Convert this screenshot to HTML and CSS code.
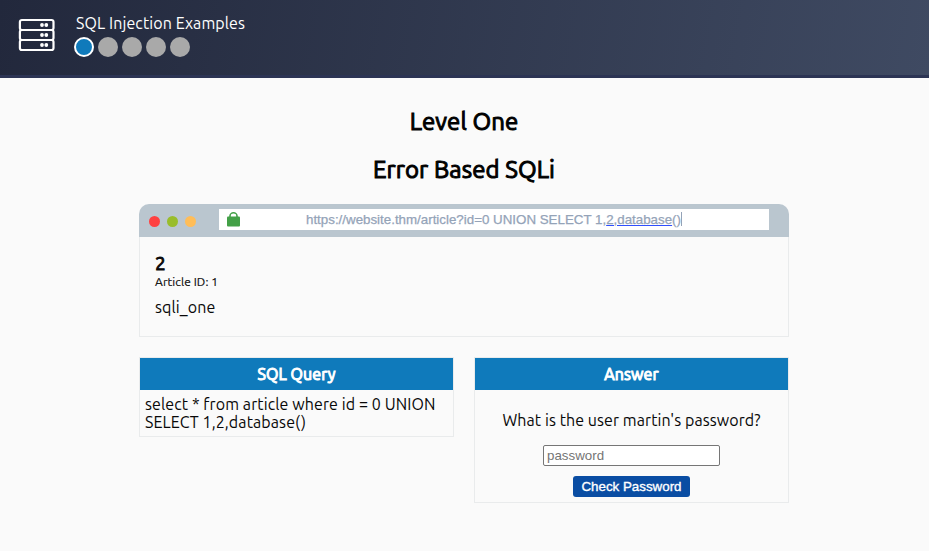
FILE: index.html
```html
<!DOCTYPE html>
<html lang="en">
<head>
<meta charset="utf-8">
<title>SQL Injection Examples</title>
<link rel="stylesheet" href="styles.css">
</head>
<body>
<header class="topbar">
  <svg class="logo" width="38" height="34" viewBox="0 0 38 34" fill="none" stroke="#fff" stroke-width="2.2">
    <rect x="1.9" y="2" width="33.6" height="10" rx="2"/>
    <rect x="1.9" y="12" width="33.6" height="10" rx="2"/>
    <rect x="1.9" y="22" width="33.6" height="10" rx="2"/>
    <g fill="#fff" stroke="none">
      <circle cx="24" cy="7" r="1.9"/><circle cx="28.3" cy="7" r="1.9"/>
      <circle cx="24" cy="17" r="1.9"/><circle cx="28.3" cy="17" r="1.9"/>
      <circle cx="24" cy="27" r="1.9"/><circle cx="28.3" cy="27" r="1.9"/>
    </g>
  </svg>
  <div class="progress">
    <div class="title">SQL Injection Examples</div>
    <div class="steps"><i class="step active"></i><i class="step"></i><i class="step"></i><i class="step"></i><i class="step"></i></div>
  </div>
</header>
<main class="content">
  <h1 class="level">Level One</h1>
  <h1 class="topic">Error Based SQLi</h1>
  <section class="browser">
    <div class="chrome">
      <i class="dot red"></i><i class="dot green"></i><i class="dot amber"></i>
      <div class="address">
        <svg class="lock" width="13" height="15" viewBox="0 0 13 15"><path d="M3 6V4a3.5 3.2 0 0 1 7 0v2" fill="none" stroke="#43a047" stroke-width="1.6"/><rect y="4.5" width="13" height="10" rx="1" fill="#43a047"/></svg>
        <div class="url">https://website.thm/article?id=0 UNION SELECT 1,<u>2,database</u>()<i class="caret"></i></div>
      </div>
    </div>
    <div class="page">
      <div class="article-title">2</div>
      <div class="article-id">Article ID: 1</div>
      <div class="article-body">sqli_one</div>
    </div>
  </section>
  <div class="panels">
    <section class="panel">
      <h2 class="panel-head">SQL Query</h2>
      <div class="query">select * from article where id = 0 UNION SELECT 1,2,database()</div>
    </section>
    <section class="panel">
      <h2 class="panel-head">Answer</h2>
      <div class="answer">
        <p class="question">What is the user martin's password?</p>
        <input class="password" type="text" placeholder="password">
        <button class="check">Check Password</button>
      </div>
    </section>
  </div>
</main>
</body>
</html>
```
FILE: styles.css
```css
* { box-sizing: border-box; }
body {
  margin: 0;
  min-height: 551px;
  background: #fafafa;
  color: #080808;
  font: 16px/18px Ubuntu, "Noto Sans", sans-serif;
}
.topbar {
  display: flex;
  height: 78px;
  padding: 14px 0 0 18px;
  border-bottom: 3px solid #2c3454;
  background: linear-gradient(100deg, #22283c, #3f4a62);
  background-origin: border-box;
  color: #fff;
}
.logo { margin-top: 4px; }
.progress { margin-left: 18px; }
.title { padding-left: 2px; height: 23px; white-space: nowrap; letter-spacing: 0.1px; }
.steps { display: flex; gap: 4px; }
.step { width: 20px; height: 20px; border-radius: 50%; background: #a9a9a9; }
.step.active { background: #0f7abb; border: 2px solid #fff; }
.content { width: 650px; margin: 0 auto 0 139px; }
.level, .topic { margin: 0; font-size: 24px; line-height: 28px; font-weight: 400; text-align: center; letter-spacing: 0.1px; color: #000; -webkit-text-stroke: 1px currentColor; }
.level { padding-top: 30px; }
.topic { margin-top: 20px; }
.browser { margin-top: 20px; }
.chrome { display: flex; align-items: center; height: 33px; padding: 0 20px 0 10px; border-radius: 10px 10px 0 0; background: #bac6cf; }
.dot { width: 11px; height: 11px; margin: 2px 7px 0 0; border-radius: 50%; }
.red { background: #ff4141; }
.green { background: #99bd2b; }
.amber { background: #ffbd58; }
.address { display: flex; align-items: center; width: 550px; height: 21px; margin: -2px 0 0 auto; padding-left: 8px; background: #fff; }
.url { flex: 1; padding-right: 21px; text-align: center; white-space: nowrap; font: 13.33px/15px "Liberation Sans", Arial, sans-serif; color: #94a3b8; -webkit-text-stroke: 0.25px currentColor; }
.url u { text-decoration: underline #304ffe 1px; text-underline-offset: 1px; }
.caret { display: inline-block; width: 1px; height: 14px; vertical-align: -2px; background: #94a3b8; }
.page { height: 100px; padding: 16px 15px; border: 1px solid #e9ebec; border-top: 0; }
.article-title { font-size: 19px; line-height: 21px; -webkit-text-stroke: 0.9px currentColor; }
.article-id { font-size: 12px; line-height: 15px; letter-spacing: 0.08px; -webkit-text-stroke: 0.15px currentColor; }
.article-body { margin-top: 9px; letter-spacing: 0.1px; }
.panels { display: flex; align-items: flex-start; justify-content: space-between; margin-top: 20px; }
.panel { width: 315px; border: 1px solid #e9ebec; }
.panel-head { margin: 0; height: 32px; font-size: 16px; line-height: 32px; font-weight: 400; text-align: center; color: #fff; background: #0f7abb; letter-spacing: 0.1px; -webkit-text-stroke: 1px currentColor; }
.query { padding: 5px; letter-spacing: 0.1px; }
.answer { display: flex; flex-direction: column; align-items: center; padding: 21px 0 5px; }
.question { margin: 0; white-space: nowrap; letter-spacing: 0.07px; }
.password { width: 177px; height: 21px; margin-top: 16px; padding: 1px 3px; border: 1px solid #767676; border-radius: 2px; background: #fff; font: 13.33px "Liberation Sans", Arial, sans-serif; }
.password::placeholder { color: #757575; }
.check { width: 117px; height: 21px; margin-top: 10px; padding: 0; border: 0; border-radius: 3px; background: #0a4da3; color: #fff; font: 13.33px "Liberation Sans", Arial, sans-serif; -webkit-text-stroke: 0.35px currentColor; }
```
